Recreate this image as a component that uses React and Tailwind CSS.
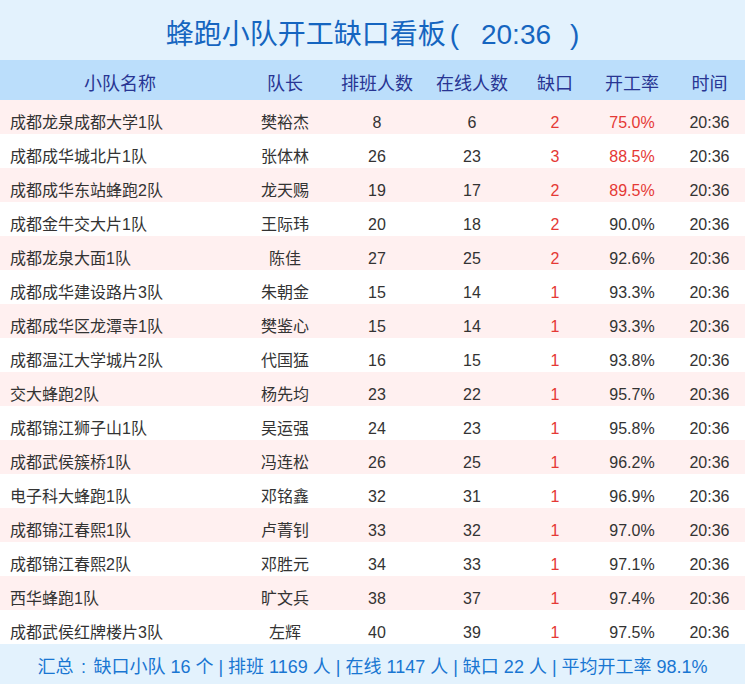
const rows = [
  ["成都龙泉成都大学1队", "樊裕杰", 8, 6, 2, "75.0%"],
  ["成都成华城北片1队", "张体林", 26, 23, 3, "88.5%"],
  ["成都成华东站蜂跑2队", "龙天赐", 19, 17, 2, "89.5%"],
  ["成都金牛交大片1队", "王际玮", 20, 18, 2, "90.0%"],
  ["成都龙泉大面1队", "陈佳", 27, 25, 2, "92.6%"],
  ["成都成华建设路片3队", "朱朝金", 15, 14, 1, "93.3%"],
  ["成都成华区龙潭寺1队", "樊鉴心", 15, 14, 1, "93.3%"],
  ["成都温江大学城片2队", "代国猛", 16, 15, 1, "93.8%"],
  ["交大蜂跑2队", "杨先均", 23, 22, 1, "95.7%"],
  ["成都锦江狮子山1队", "吴运强", 24, 23, 1, "95.8%"],
  ["成都武侯簇桥1队", "冯连松", 26, 25, 1, "96.2%"],
  ["电子科大蜂跑1队", "邓铭鑫", 32, 31, 1, "96.9%"],
  ["成都锦江春熙1队", "卢菁钊", 33, 32, 1, "97.0%"],
  ["成都锦江春熙2队", "邓胜元", 34, 33, 1, "97.1%"],
  ["西华蜂跑1队", "旷文兵", 38, 37, 1, "97.4%"],
  ["成都武侯红牌楼片3队", "左辉", 40, 39, 1, "97.5%"],
];

const cols = "grid grid-cols-[240px_90px_94px_96px_70px_84px_71px]";

export default function App() {
  return (
    <div className="w-[745px] h-[684px] flex flex-col bg-white font-['Liberation_Sans','Noto_Sans_CJK_SC',sans-serif]">
      <div className="h-[60px] bg-[#e3f2fd] flex items-center justify-center pt-[9px] text-[28px] leading-none text-[#1565c0]">
        <span>蜂跑小队开工缺口看板</span>
        <span className="ml-[4px]">(</span>
        <span className="ml-[22px]">20:36</span>
        <span className="ml-[19px]">)</span>
      </div>
      <div className={`${cols} h-[40px] bg-[#bbdefb] items-center pt-[8px] text-[18px] leading-none text-[#283593]`}>
        <div className="text-center">小队名称</div>
        <div className="text-center">队长</div>
        <div className="text-center">排班人数</div>
        <div className="text-center">在线人数</div>
        <div className="text-center">缺口</div>
        <div className="text-center">开工率</div>
        <div className="text-center">时间</div>
      </div>
      <div className="flex flex-col">
        {rows.map((r, i) => {
          const low = parseFloat(r[5]) < 90;
          return (
            <div
              key={i}
              className={`${cols} h-[34px] items-center pt-[11px] text-[16px] leading-none text-[#333333] ${i % 2 === 0 ? "bg-[#fff0f0]" : "bg-white"}`}
            >
              <div className="pl-[10px] whitespace-nowrap">{r[0]}</div>
              <div className="text-center">{r[1]}</div>
              <div className="text-center">{r[2]}</div>
              <div className="text-center">{r[3]}</div>
              <div className="text-center text-[#e53935]">{r[4]}</div>
              <div className={`text-center ${low ? "text-[#e53935]" : ""}`}>{r[5]}</div>
              <div className="text-center">20:36</div>
            </div>
          );
        })}
      </div>
      <div className="h-[40px] bg-[#e3f2fd] flex items-center justify-center pt-[6px] text-[18px] leading-none text-[#1976d2] whitespace-pre">
        <span>汇总</span>
        <span className="inline-block w-[20px] text-center">:</span>
        <span>缺口小队 16 个 | 排班 1169 人 | 在线 1147 人 | 缺口 22 人 | 平均开工率 98.1%</span>
      </div>
    </div>
  );
}
